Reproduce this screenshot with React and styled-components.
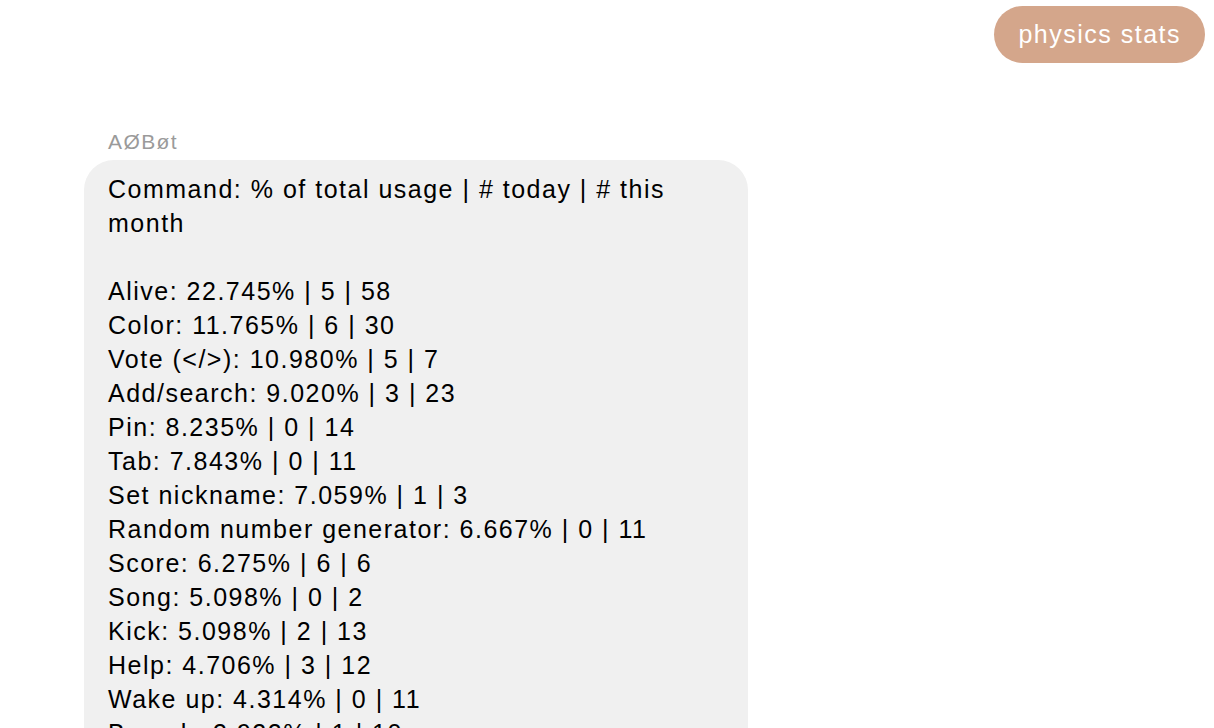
import React from "react";
import styled, { createGlobalStyle } from "styled-components";

const Global = createGlobalStyle`
  html, body { margin: 0; padding: 0; background: #ffffff; }
  body { font-family: "Liberation Sans", Arial, Helvetica, sans-serif; }
`;

const Chat = styled.div`
  display: flex;
  flex-direction: column;
  padding: 6px 9px 0 84px;
`;

const OutRow = styled.div`
  display: flex;
  justify-content: flex-end;
`;

const OutBubble = styled.div`
  background: #d4a68b;
  color: #ffffff;
  font-size: 25px;
  letter-spacing: 1.5px;
  line-height: 33px;
  padding: 12px 24px;
  border-radius: 29px;
`;

const InGroup = styled.div`
  display: flex;
  flex-direction: column;
  align-items: flex-start;
  margin-top: 67px;
`;

const Sender = styled.div`
  color: #9a9a9a;
  font-size: 21px;
  letter-spacing: 1.4px;
  line-height: 24px;
  padding-left: 24px;
  margin-bottom: 6px;
`;

const InBubble = styled.div`
  background: #f0f0f0;
  color: #000000;
  font-size: 25px;
  letter-spacing: 1.5px;
  line-height: 34px;
  width: 616px;
  padding: 12px 24px 20px;
  border-radius: 30px;
  white-space: pre-wrap;
`;

const lines = [
  "Command: % of total usage | # today | # this month",
  "",
  "Alive: 22.745% | 5 | 58",
  "Color: 11.765% | 6 | 30",
  "Vote (</>): 10.980% | 5 | 7",
  "Add/search: 9.020% | 3 | 23",
  "Pin: 8.235% | 0 | 14",
  "Tab: 7.843% | 0 | 11",
  "Set nickname: 7.059% | 1 | 3",
  "Random number generator: 6.667% | 0 | 11",
  "Score: 6.275% | 6 | 6",
  "Song: 5.098% | 0 | 2",
  "Kick: 5.098% | 2 | 13",
  "Help: 4.706% | 3 | 12",
  "Wake up: 4.314% | 0 | 11",
  "Branch: 3.922% | 1 | 10",
];

export default function App() {
  return (
    <>
      <Global />
      <Chat>
        <OutRow>
          <OutBubble>physics stats</OutBubble>
        </OutRow>
        <InGroup>
          <Sender>AØBøt</Sender>
          <InBubble>{lines.join("\n")}</InBubble>
        </InGroup>
      </Chat>
    </>
  );
}
